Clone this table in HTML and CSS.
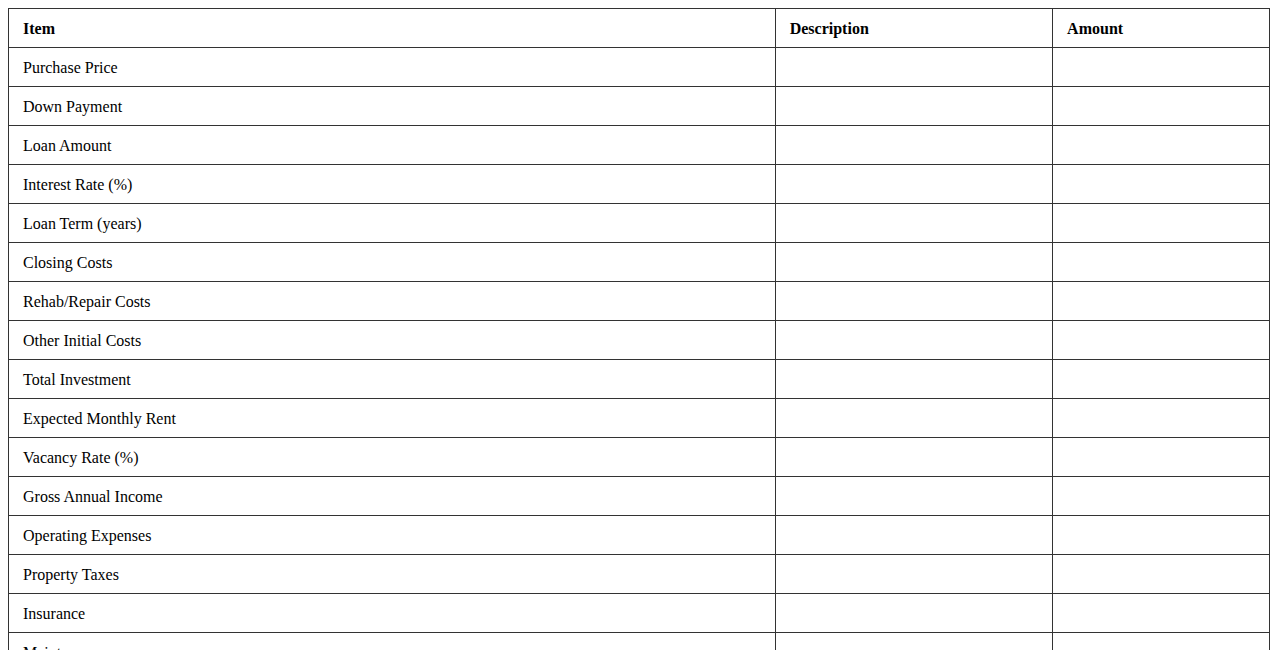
FILE: index.html
```html
<!DOCTYPE html>
<html>
<head>
<meta charset="utf-8">
<link rel="stylesheet" href="styles.css">
</head>
<body>
<table class="sheet">
  <colgroup>
    <col class="c-item">
    <col class="c-desc">
    <col class="c-amt">
  </colgroup>
  <thead>
    <tr><th>Item</th><th>Description</th><th>Amount</th></tr>
  </thead>
  <tbody>
    <tr><td>Purchase Price</td><td></td><td></td></tr>
    <tr><td>Down Payment</td><td></td><td></td></tr>
    <tr><td>Loan Amount</td><td></td><td></td></tr>
    <tr><td>Interest Rate (%)</td><td></td><td></td></tr>
    <tr><td>Loan Term (years)</td><td></td><td></td></tr>
    <tr><td>Closing Costs</td><td></td><td></td></tr>
    <tr><td>Rehab/Repair Costs</td><td></td><td></td></tr>
    <tr><td>Other Initial Costs</td><td></td><td></td></tr>
    <tr><td>Total Investment</td><td></td><td></td></tr>
    <tr><td>Expected Monthly Rent</td><td></td><td></td></tr>
    <tr><td>Vacancy Rate (%)</td><td></td><td></td></tr>
    <tr><td>Gross Annual Income</td><td></td><td></td></tr>
    <tr><td>Operating Expenses</td><td></td><td></td></tr>
    <tr><td>Property Taxes</td><td></td><td></td></tr>
    <tr><td>Insurance</td><td></td><td></td></tr>
    <tr><td>Maintenance</td><td></td><td></td></tr>
    <tr><td>Property Management</td><td></td><td></td></tr>
    <tr><td>Net Operating Income</td><td></td><td></td></tr>
  </tbody>
</table>
</body>
</html>
```
FILE: styles.css
```css
html, body {
  background: #ffffff;
}
body {
  margin: 8px;
  font-family: "Liberation Serif", "Times New Roman", serif;
  font-size: 16px;
  color: #000;
}
.sheet {
  width: 100%;
  border-collapse: collapse;
  table-layout: fixed;
}
.c-item { width: 60.8%; }
.c-desc { width: 22%; }
.c-amt { width: auto; }
.sheet th,
.sheet td {
  border: 1px solid #333;
  padding: 11px 14px 9px;
  line-height: 18px;
  height: 18px;
  text-align: left;
  vertical-align: middle;
}
.sheet th {
  font-weight: bold;
}
```
